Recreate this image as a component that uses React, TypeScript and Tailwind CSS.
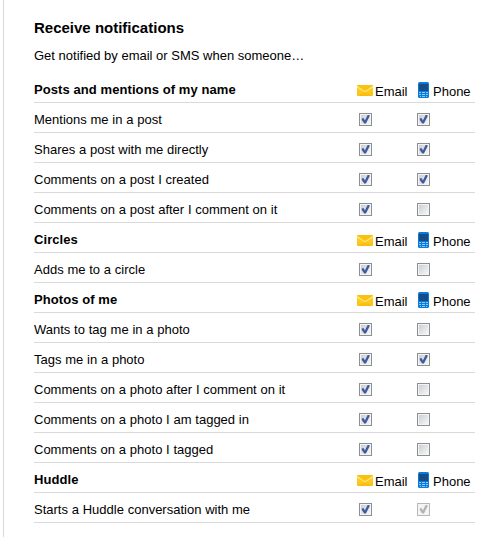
import clsx from "clsx";

type CheckState = "on" | "off" | "disabled";

interface Setting {
    label: string;
    email: CheckState;
    phone: CheckState;
}

interface Section {
    title: string;
    settings: Setting[];
}

const sections: Section[] = [
    {
        title: "Posts and mentions of my name",
        settings: [
            { label: "Mentions me in a post", email: "on", phone: "on" },
            { label: "Shares a post with me directly", email: "on", phone: "on" },
            { label: "Comments on a post I created", email: "on", phone: "on" },
            { label: "Comments on a post after I comment on it", email: "on", phone: "off" },
        ],
    },
    {
        title: "Circles",
        settings: [{ label: "Adds me to a circle", email: "on", phone: "off" }],
    },
    {
        title: "Photos of me",
        settings: [
            { label: "Wants to tag me in a photo", email: "on", phone: "off" },
            { label: "Tags me in a photo", email: "on", phone: "on" },
            { label: "Comments on a photo after I comment on it", email: "on", phone: "off" },
            { label: "Comments on a photo I am tagged in", email: "on", phone: "off" },
            { label: "Comments on a photo I tagged", email: "on", phone: "off" },
        ],
    },
    {
        title: "Huddle",
        settings: [{ label: "Starts a Huddle conversation with me", email: "on", phone: "disabled" }],
    },
];

const MailIcon = () => (
    <svg width="16" height="11" viewBox="0 0 16 11" className="shrink-0">
        <defs>
            <linearGradient id="mail" x1="0" y1="0" x2="0" y2="1">
                <stop offset="0" stopColor="#ffda35" />
                <stop offset="1" stopColor="#fbba0b" />
            </linearGradient>
        </defs>
        <rect width="16" height="11" rx="1" fill="url(#mail)" />
        <path d="M0 1.5L0.5 0h15l0.5 1.5-6.5 4.3q-1.5 1-3 0z" fill="#fcc012" />
        <path d="M0 1.5l6.5 4.4q1.5 1 3 0L16 1.5" fill="none" stroke="#ffee85" strokeWidth="1.1" />
        <path d="M0.5 10.5l5-4.5M15.5 10.5l-5-4.5" stroke="#ffdc58" strokeWidth="0.5" />
    </svg>
);

const PhoneIcon = () => (
    <svg width="11" height="16" viewBox="0 0 11 16" className="shrink-0">
        <rect width="11" height="16" rx="1.5" fill="#087be0" />
        <rect x="1" y="2" width="9" height="7" fill="#174d83" />
        <path
            d="M1 10h2v1H1zM4 10h3v1H4zM8 10h2v1H8zM1 12h2v1H1zM4 12h3v1H4zM8 12h2v1H8zM2 14h1v1H2zM4 14h3v1H4zM8 14h1v1H8z"
            fill="#8bcbf8"
        />
    </svg>
);

const Checkbox = ({ state }: { state: CheckState }) => (
    <svg width="13" height="13" viewBox="0 0 13 13" className="shrink-0">
        <defs>
            <linearGradient id="box" x1="0" y1="0" x2="1" y2="1">
                <stop offset="0" stopColor="#cbcfd5" />
                <stop offset="1" stopColor="#f6f6f6" />
            </linearGradient>
        </defs>
        <rect x="0.5" y="0.5" width="12" height="12" fill="#f4f4f4" stroke={state === "disabled" ? "#b8b8b8" : "#8e8f8f"} />
        {state !== "disabled" && <rect x="2" y="2" width="9" height="9" fill="url(#box)" />}
        {state !== "off" && (
            <path
                d="M2.8 5.2h2L5.9 7.4 8.6 2h1.9v1.4L6.9 10.5H5.2L2.8 7z"
                fill={state === "disabled" ? "#b2b2b2" : "#405a9d"}
            />
        )}
    </svg>
);

const Row = ({ children }: { children: React.ReactNode }) => (
    <div className={clsx("flex h-[30px] border-b border-[#dadada] leading-[33px]")}>{children}</div>
);

const App = () => {
    return (
        <div className="h-[537px] w-[499px] overflow-hidden bg-white pl-[3px] font-['Liberation_Sans',Arial,sans-serif] text-[13px] text-black">
            <div className="h-full border-l border-[#d8d8d8] pt-[18px] pl-[30px]">
                <h1 className="h-5 text-[15px] leading-5 font-bold">Receive notifications</h1>
                <p className="mt-2 h-5 leading-5">Get notified by email or SMS when someone…</p>
                <div className="mt-[7px] w-[441px]">
                    {sections.map((section) => (
                        <section key={section.title}>
                            <Row>
                                <h2 className="w-[323px] font-bold tracking-[0.08px]">{section.title}</h2>
                                <div className="flex w-[61px] items-start gap-0.5">
                                    <div className="pt-3">
                                        <MailIcon />
                                    </div>
                                    <span className="pt-[11px] leading-4">Email</span>
                                </div>
                                <div className="flex items-start gap-1">
                                    <div className="pt-[9px]">
                                        <PhoneIcon />
                                    </div>
                                    <span className="pt-[11px] leading-4">Phone</span>
                                </div>
                            </Row>
                            {section.settings.map((setting) => (
                                <Row key={setting.label}>
                                    <div className="w-[325px] [word-spacing:0.15px]">{setting.label}</div>
                                    <div className="w-[58px] pt-2.5">
                                        <Checkbox state={setting.email} />
                                    </div>
                                    <div className="pt-2.5">
                                        <Checkbox state={setting.phone} />
                                    </div>
                                </Row>
                            ))}
                        </section>
                    ))}
                </div>
            </div>
        </div>
    );
};

export default App;
